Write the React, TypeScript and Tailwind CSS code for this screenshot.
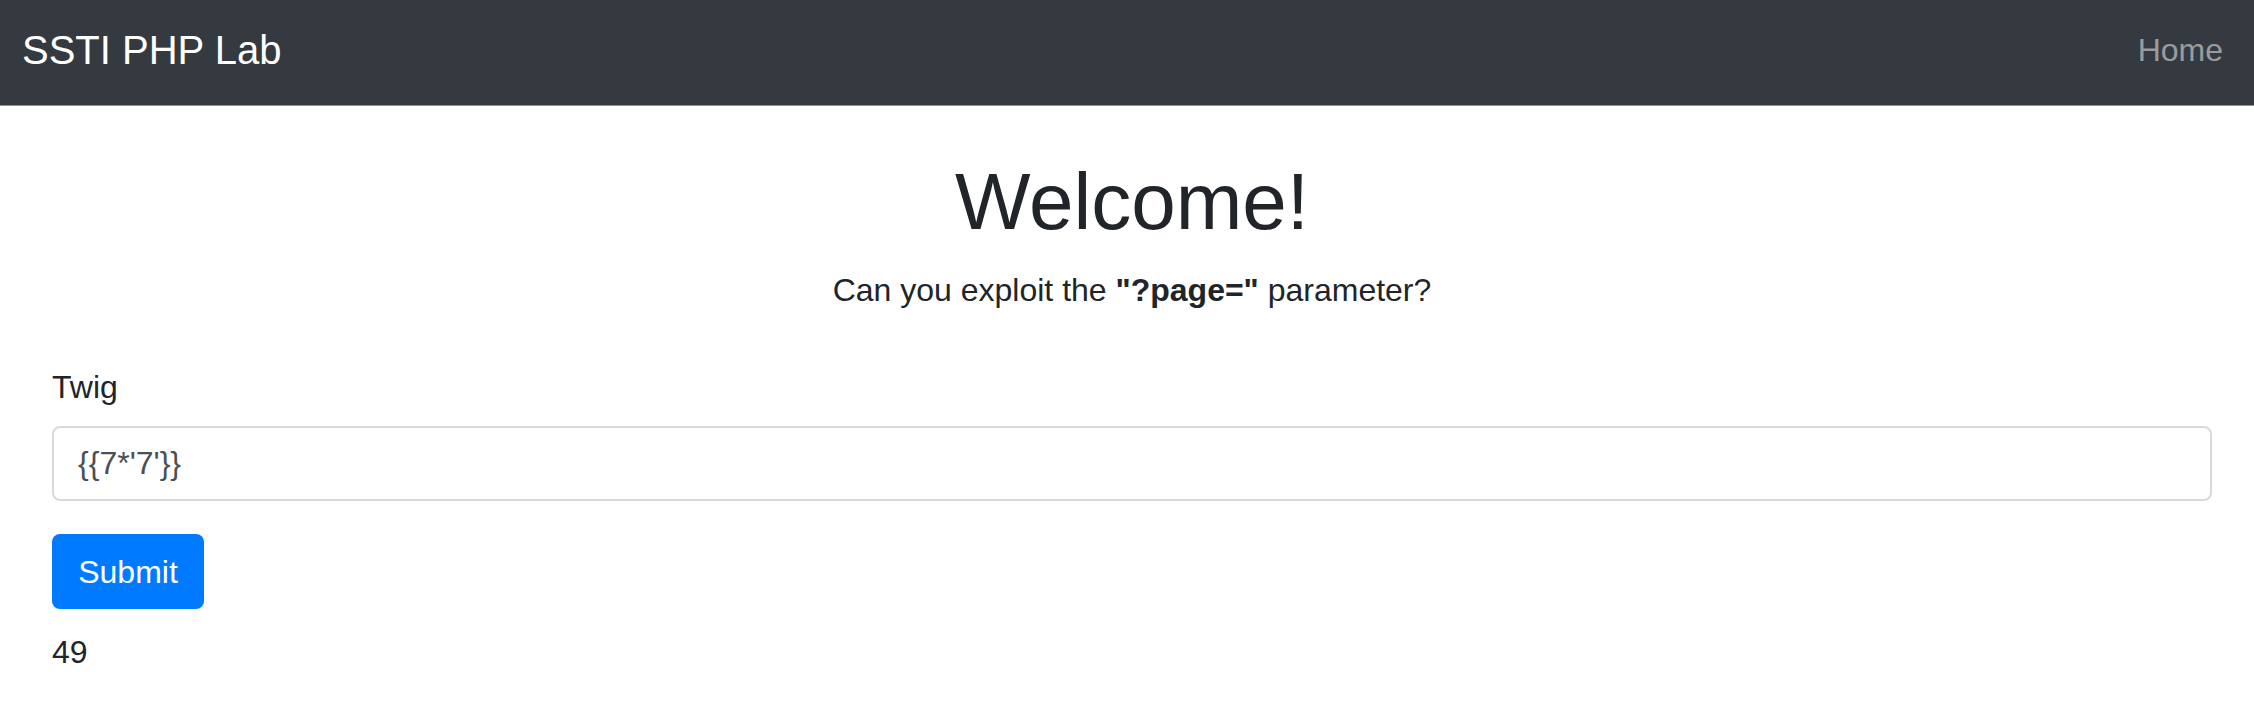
const font = { fontFamily: '"Liberation Sans", Arial, sans-serif' }

const Navbar = () => {
  return (
    <nav className="flex h-[106px] items-center justify-between border-b border-[#8f9398] bg-[#343a40] pb-[5px] pl-[22px] pr-[31px]">
      <a href="#" className="text-[40px] leading-[60px] text-white no-underline">
        SSTI PHP Lab
      </a>
      <a href="#" className="text-[32px] leading-[48px] text-white/50 no-underline">
        Home
      </a>
    </nav>
  )
}

export default function App() {
  return (
    <div style={font} className="min-h-[710px] bg-white text-[#212529]">
      <Navbar />
      <main className="pl-[52px] pr-[42px]">
        <div className="text-center">
          <h1 className="mt-[48px] mb-[16px] text-[80px] font-normal leading-[96px]">Welcome!</h1>
          <p className="text-[32px] leading-[48px]">
            Can you exploit the <b className="font-bold">"?page="</b> parameter?
          </p>
        </div>
        <form className="mt-[49px]">
          <label className="block text-[32px] leading-[48px]">Twig</label>
          <input
            type="text"
            readOnly
            value={"{{7*'7'}}"}
            className="mt-[15px] block h-[75px] w-full rounded-[8px] border-2 border-[#d6dadf] bg-white px-[24px] text-[32px] text-[#495057] outline-none"
            style={font}
          />
          <button
            type="button"
            className="mt-[33px] flex h-[75px] w-[152px] items-center justify-center rounded-[8px] bg-[#007bff] text-[32px] text-white"
            style={font}
          >
            Submit
          </button>
        </form>
        <div className="mt-[19px] text-[32px] leading-[48px]">49</div>
      </main>
    </div>
  )
}
